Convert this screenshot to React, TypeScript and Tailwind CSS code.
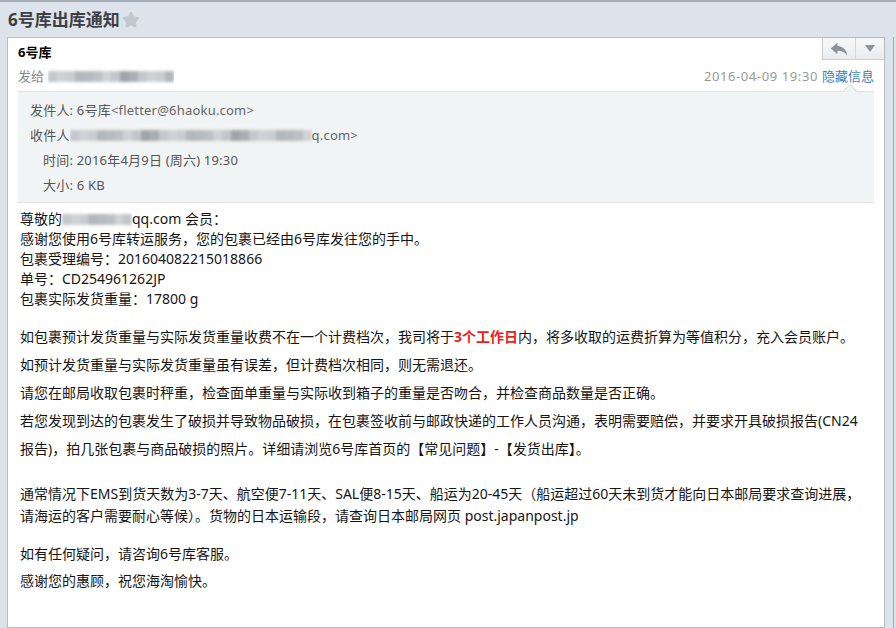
import { Star } from 'lucide-react'

const font = { fontFamily: '"Noto Sans", "Noto Sans CJK SC", sans-serif' }

const shades = ['#c4c8cc', '#b3b8bd', '#d0d3d6', '#a9aeb3', '#c9cdd1', '#bcc0c4', '#9fa4a9', '#cfd2d5', '#b6bbc0', '#c2c6ca']

// masked (pixelated) address, drawn as blurred gray blocks
function Blurred({ width }: { width: number }) {
  const n = Math.max(1, Math.round(width / 9))
  return (
    <span className="inline-flex h-[20px] shrink-0 items-center overflow-hidden" style={{ width }}>
      <span className="flex h-[11px] w-full blur-[1.5px]">
        {Array.from({ length: n }).map((_, i) => (
          <span key={i} className="h-full flex-1" style={{ backgroundColor: shades[(i * 7) % shades.length] }} />
        ))}
      </span>
    </span>
  )
}

function ReplyButtons() {
  return (
    <div className="absolute right-0 top-0 flex h-[22px] border-b border-l border-[#c9ced3] bg-gradient-to-b from-[#f7f8f9] to-[#e9ecef]">
      <button className="flex w-[33px] items-center justify-center border-r border-[#d3d7db]">
        <svg width="18" height="14" viewBox="0 0 17 13">
          <path d="M7 0.5 L0.8 6 L7 11.5 V8.2 C11 8 14 9.6 16.4 12.6 C15.6 7.6 12.6 4.2 7 3.7 Z" fill="#8a939b" />
        </svg>
      </button>
      <button className="flex w-[28px] items-center justify-center">
        <svg width="10" height="7" viewBox="0 0 10 7">
          <path d="M0 0 H10 L5 7 Z" fill="#8a939b" />
        </svg>
      </button>
    </div>
  )
}

function InfoBox() {
  return (
    <div className="relative mt-[5px] border-t border-b border-[#dfe3e5] bg-[#f1f4f4] pb-[4px] pt-[6px] text-[13px] leading-[25px] tracking-[0.2px] text-[#555]">
      <span className="absolute -top-[6px] right-[19px] h-[10px] w-[10px] rotate-45 border-l border-t border-[#dfe3e5] bg-[#f1f4f4]" />
      <div className="pl-[12px]">
        发件人: 6号库<span className="text-[#666]">&lt;fletter@6haoku.com&gt;</span>
      </div>
      <div className="flex items-center pl-[12px]">
        <span>收件人</span>
        <Blurred width={242} />
        <span className="text-[#666]">q.com&gt;</span>
      </div>
      <div className="pl-[25px]">时间: 2016年4月9日 (周六) 19:30</div>
      <div className="pl-[25px]">大小: 6 KB</div>
    </div>
  )
}

function Body() {
  return (
    <div className="pl-[2px] pr-[4px] text-[14px] text-[#151515]">
      <div className="mt-[6px] leading-[20px]">
        <p className="flex">
          <span>尊敬的</span>
          <Blurred width={70} />
          <span>qq.com 会员：</span>
        </p>
        <p>感谢您使用6号库转运服务，您的包裹已经由6号库发往您的手中。</p>
        <p>包裹受理编号：201604082215018866</p>
        <p>单号：CD254961262JP</p>
        <p>包裹实际发货重量：17800 g</p>
      </div>
      <div className="mt-[14px] leading-[28px]">
        <p>
          如包裹预计发货重量与实际发货重量收费不在一个计费档次，我司将于
          <b className="text-[#e8231e]">3个工作日</b>内，将多收取的运费折算为等值积分，充入会员账户。
        </p>
        <p>如预计发货重量与实际发货重量虽有误差，但计费档次相同，则无需退还。</p>
        <p>请您在邮局收取包裹时秤重，检查面单重量与实际收到箱子的重量是否吻合，并检查商品数量是否正确。</p>
        <p>
          若您发现到达的包裹发生了破损并导致物品破损，在包裹签收前与邮政快递的工作人员沟通，表明需要赔偿，并要求开具破损报告(CN24报告)，拍几张包裹与商品破损的照片。详细请浏览6号库首页的【常见问题】-【发货出库】。
        </p>
      </div>
      <p className="mt-[20px] leading-[22px]">
        通常情况下EMS到货天数为3-7天、航空便7-11天、SAL便8-15天、船运为20-45天（船运超过60天未到货才能向日本邮局要求查询进展，请海运的客户需要耐心等候）。货物的日本运输段，请查询日本邮局网页 post.japanpost.jp
      </p>
      <div className="mt-[13px] leading-[27px]">
        <p>如有任何疑问，请咨询6号库客服。</p>
        <p>感谢您的惠顾，祝您海淘愉快。</p>
      </div>
    </div>
  )
}

export default function App() {
  return (
    <div style={font} className="flex h-[628px] w-[896px] flex-col overflow-hidden border-t-2 border-[#a3adb8] bg-[#dde3ea]">
      <div className="flex h-[35px] shrink-0 items-center pl-[8px]">
        <h1 className="text-[17px] font-bold text-[#3c3f43]">6号库出库通知</h1>
        <Star size={18} className="ml-[2px] fill-[#c3c8ce] text-[#c3c8ce]" />
      </div>
      <div className="flex flex-1">
        <div className="relative ml-[7px] w-[878px] shrink-0 border border-[#b5bcc3] bg-white px-[10px] pt-[4px]">
          <ReplyButtons />
          <div className="text-[13px] font-bold leading-[20px] text-black">6号库</div>
          <div className="mt-[4px] flex items-center text-[13px] leading-[20px]">
            <span className="text-[#888]">发给</span>
            <span className="ml-[4px] flex">
              <Blurred width={126} />
            </span>
            <span className="ml-auto tracking-[0.6px] text-[#999]">2016-04-09 19:30</span>
            <span className="ml-[4px] text-[#3e7fc0]">隐藏信息</span>
          </div>
          <InfoBox />
          <Body />
        </div>
        <div className="ml-[8px] w-px bg-[#a3adb8]" />
      </div>
    </div>
  )
}
